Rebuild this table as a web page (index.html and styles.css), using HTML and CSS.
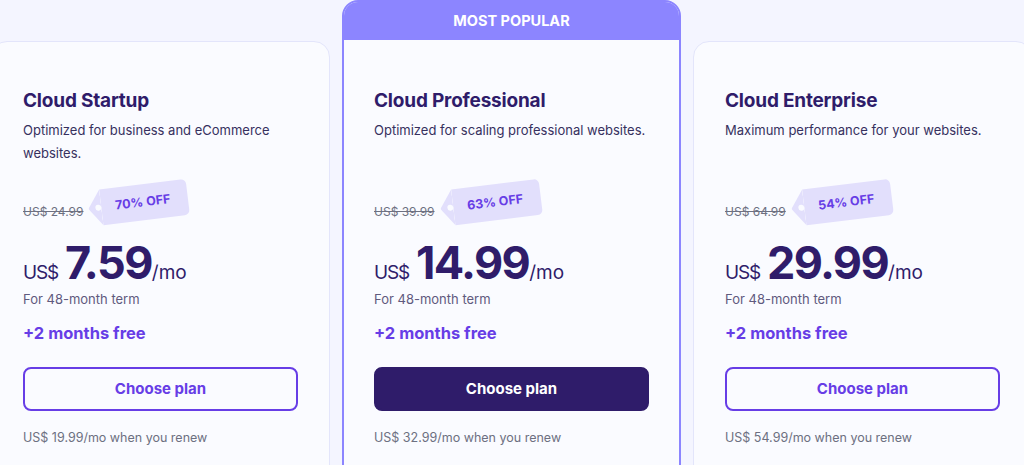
FILE: index.html
```html
<html>
<head>
  <meta http-equiv="Content-Type" content="text/html; charset=utf8">
  <title>Cloud hosting plans</title>
  <link rel="stylesheet" href="styles.css">
</head>
<body>
  <div class="plans">
    <div class="card">
      <div class="plan_name">Cloud Startup</div>
      <div class="plan_desc">Optimized for business and eCommerce websites.</div>
      <div class="was_row">
        <span class="was">US$ 24.99</span>
        <span class="tag">70% OFF</span>
      </div>
      <div class="price">
        <span class="cur">US$</span><span class="amount">7.59</span><span class="per">/mo</span>
      </div>
      <div class="term">For 48-month term</div>
      <div class="bonus">+2 months free</div>
      <span class="btn_choose">Choose plan</span>
      <div class="renew">US$ 19.99/mo when you renew</div>
    </div>

    <div class="card card_popular">
      <div class="ribbon">MOST POPULAR</div>
      <div class="card_body">
        <div class="plan_name">Cloud Professional</div>
        <div class="plan_desc">Optimized for scaling professional websites.</div>
        <div class="was_row">
          <span class="was">US$ 39.99</span>
          <span class="tag">63% OFF</span>
        </div>
        <div class="price">
          <span class="cur">US$</span><span class="amount">14.99</span><span class="per">/mo</span>
        </div>
        <div class="term">For 48-month term</div>
        <div class="bonus">+2 months free</div>
        <span class="btn_choose btn_choose_dark">Choose plan</span>
        <div class="renew">US$ 32.99/mo when you renew</div>
      </div>
    </div>

    <div class="card">
      <div class="plan_name">Cloud Enterprise</div>
      <div class="plan_desc">Maximum performance for your websites.</div>
      <div class="was_row">
        <span class="was">US$ 64.99</span>
        <span class="tag">54% OFF</span>
      </div>
      <div class="price">
        <span class="cur">US$</span><span class="amount">29.99</span><span class="per">/mo</span>
      </div>
      <div class="term">For 48-month term</div>
      <div class="bonus">+2 months free</div>
      <span class="btn_choose">Choose plan</span>
      <div class="renew">US$ 54.99/mo when you renew</div>
    </div>
  </div>
</body>
</html>
```

FILE: styles.css
```css
body {
  margin: 0;
  background-color: #F4F5FF;
  font-family: Inter, "DejaVu Sans", sans-serif;
  color: #2F1C6A;
  overflow: hidden;
}
.plans {
  display: flex;
  align-items: flex-start;
  gap: 12px;
  margin-left: -9px;
}
.card {
  box-sizing: border-box;
  flex: 0 0 339px;
  width: 339px;
  min-height: 480px;
  margin-top: 41px;
  padding: 47px 31px 32px 31px;
  background-color: #FAFBFF;
  border: 1px solid #E3E5FB;
  border-radius: 16px;
}
.card_popular {
  margin-top: 0;
  padding: 0;
  border: 2px solid #8C85FF;
  overflow: hidden;
}
.ribbon {
  height: 38px;
  line-height: 38px;
  background-color: #8C85FF;
  color: #FFFFFF;
  font-size: 14.5px;
  font-weight: 700;
  text-align: center;
}
.card_body {
  padding: 49px 30px 32px 30px;
}
.plan_name {
  font-size: 19px;
  font-weight: 700;
  line-height: 24px;
  letter-spacing: -0.2px;
}
.plan_desc {
  margin-top: 6px;
  min-height: 46px;
  font-size: 13px;
  line-height: 23px;
  color: #36305E;
}
.was_row {
  display: flex;
  align-items: flex-start;
  gap: 5px;
  height: 42px;
  margin-top: 16px;
}
.was {
  margin-top: 22px;
  font-size: 12px;
  line-height: 18px;
  color: #6D7081;
  text-decoration: line-through;
}
.tag {
  position: relative;
  margin-top: 3px;
  margin-left: 13px;
  height: 36px;
  line-height: 36px;
  padding: 0 18px 0 14px;
  background-color: #E2DFFC;
  border-radius: 0 5px 5px 0;
  color: #673DE6;
  font-size: 12.5px;
  font-weight: 700;
  transform: rotate(-7deg);
}
.tag::before {
  content: "";
  position: absolute;
  left: -13px;
  top: 0;
  width: 13px;
  height: 36px;
  background-color: #E2DFFC;
  clip-path: polygon(100% 0, 0 50%, 100% 100%);
}
.tag::after {
  content: "";
  position: absolute;
  left: -6px;
  top: 15px;
  width: 6px;
  height: 6px;
  border-radius: 50%;
  background-color: #FAFBFF;
}
.price {
  margin-top: 16px;
  height: 48px;
  line-height: 48px;
  white-space: nowrap;
}
.cur, .per {
  font-size: 19px;
  font-weight: 400;
}
.cur {
  margin-right: 7px;
  letter-spacing: -1.2px;
}
.amount {
  font-size: 45px;
  font-weight: 700;
  letter-spacing: -1.6px;
}
.term {
  margin-top: 2px;
  font-size: 13px;
  line-height: 20px;
  color: #5F5A7E;
}
.bonus {
  margin-top: 12px;
  font-size: 16.5px;
  font-weight: 700;
  line-height: 24px;
  color: #673DE6;
}
.btn_choose {
  display: block;
  box-sizing: border-box;
  margin-top: 22px;
  height: 44px;
  line-height: 40px;
  border: 2px solid #673DE6;
  border-radius: 8px;
  color: #673DE6;
  font-size: 15px;
  font-weight: 700;
  text-align: center;
  cursor: pointer;
}
.btn_choose_dark {
  background-color: #2F1C6A;
  border-color: #2F1C6A;
  color: #FFFFFF;
}
.renew {
  margin-top: 17px;
  font-size: 12.5px;
  line-height: 20px;
  color: #6D7081;
}
```
